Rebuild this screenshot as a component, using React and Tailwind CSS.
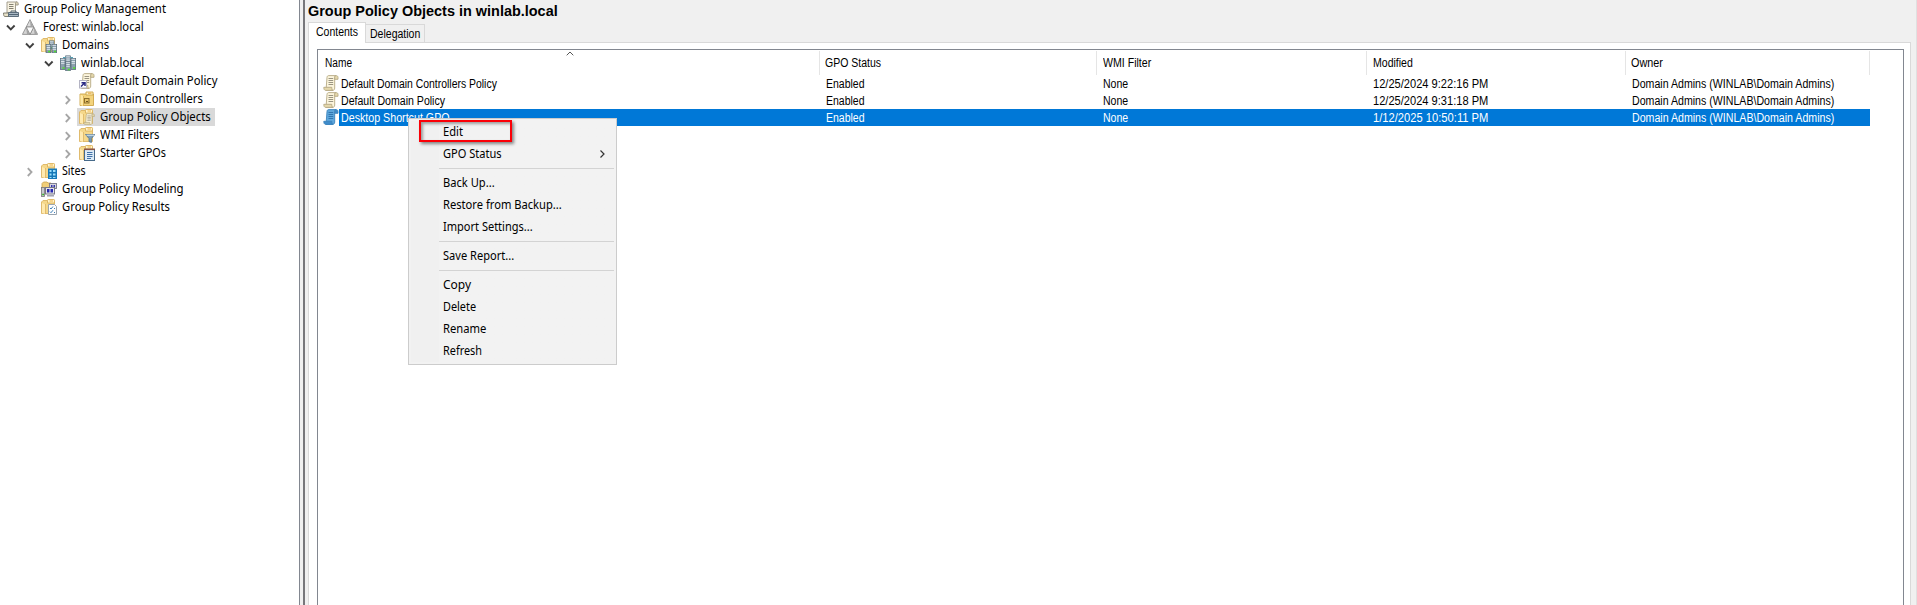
import { useLayoutEffect, useRef, useState } from "react";
import { clsx } from "clsx";

/* Text condensed or widened horizontally to an exact width, like GDI-hinted labels. */
function Label({ w, children, className }) {
  const ref = useRef(null);
  const [scale, setScale] = useState(1);
  useLayoutEffect(() => {
    setScale(w / ref.current.offsetWidth);
  }, [w]);
  return (
    <span className={clsx("block shrink-0 whitespace-nowrap", className)} style={{ width: w }}>
      <span ref={ref} className="inline-block origin-left" style={{ transform: `scaleX(${scale})` }}>
        {children}
      </span>
    </span>
  );
}

const Folder = () => (
  <g>
    <path d="M.5 14.500V3L2 1.500h4L7 3h6.500v11.500z" fill="#f5d88b" stroke="#dcb564" strokeWidth=".9" />
    <path d="M6.500 4V1.200c0-.5.3-.7.700-.7h5.600c.4 0 .7.2.7.7V4z" fill="#fff4cc" stroke="#dcb25a" strokeWidth=".9" />
    <path d="M8.500 2h3.500" stroke="#f0b44a" />
    <path d="M1 4l3.200 1.500V15L1 14z" fill="#ffeab0" />
    <path d="M4.500 5v10" stroke="#dcb564" strokeWidth=".8" />
  </g>
);

const Scroll = ({ fill = "#fcf5dc", line = "#8f8a78", edge = "#b5a985", curl = "#e6d9ac" }) => (
  <g strokeWidth=".9">
    <path d="M4 2.500C4 1.200 4.800.6 5.800.6H13c-1 .3-1.300 1-1.300 2V13c0 1.500-.8 2.400-2 2.400H3z" fill={fill} stroke={edge} />
    <path d="M11.700 4.300V2.400c0-2.400 3.300-2.300 3.300 0v1.900z" fill={curl} stroke={edge} />
    <path d="M.8 12.300h8c0 1.800.2 2.800 1.200 3.100H2.800C1.200 15.400.8 14 .8 12.300z" fill={curl} stroke={edge} />
    <path d="M5.500 3.500h4.700M5.500 5.500h4.700M5.500 7.500h4.700M5.500 9.500h4.700" stroke={line} />
  </g>
);

const Server = ({ x, y, h = 9 }) => (
  <g transform={`translate(${x} ${y})`}>
    <rect x=".4" y=".4" width="4.600" height={h} fill="#8da0ae" stroke="#586c7a" strokeWidth=".8" />
    <path d="M.8 1.300h3.800M1 3.500h3.500M1 5.300h3.500" stroke="#e3ecf2" strokeWidth=".9" />
    <path d={`M2.500 ${h - 1}h2`} stroke="#4fe02c" strokeWidth="1.600" />
  </g>
);

const drawings = {
  console: (
    <g>
      <path d="M4 1h10c-1.500.4-1.500 1.500-1.500 2.500V12H4z" fill="#f8f3e2" stroke="#9b9586" strokeWidth=".9" />
      <path d="M12.500 4V2.500c0-2 2.700-2 2.700 0V4z" fill="#ddd4b6" stroke="#9b9586" strokeWidth=".9" />
      <path d="M6 3.500h4.500M6 5.500h4.500M6 7.500h4.500" stroke="#858172" />
      <path d="M.5 12h6v3.500H2c-1.200 0-1.500-1.500-1.500-3.500z" fill="#e8e2c9" stroke="#777566" strokeWidth=".9" />
      <path d="M5.500 11.500h10v4h-10z" fill="#a9b8c4" stroke="#5d6e7c" />
      <path d="M8 11.500V10h5v1.500M6 13.500h9" fill="none" stroke="#526574" />
    </g>
  ),
  forest: (
    <g stroke="#858585" strokeWidth=".8" strokeLinejoin="round">
      <path d="M8 .6L4.200 8h7.600z" fill="#dcdcdc" />
      <path d="M4.200 8L.4 15.400H8zM11.800 8L8 15.400h7.600z" fill="#d4d4d4" />
      <path d="M4.200 8h7.600L8 15.400z" fill="#fafafa" />
      <path d="M8 .9L11.500 8H8.700zM4.200 8.400L8 15.200H5zM11.800 8.400l3.500 6.800h-2.700z" fill="#a4a4a4" stroke="none" />
    </g>
  ),
  domains: (
    <g>
      <Folder />
      <Server x={8} y={3.500} h={8} />
      <Server x={4.700} y={7} h={8.500} />
      <Server x={10.600} y={7} h={8.500} />
    </g>
  ),
  domain: (
    <g>
      <Server x={5.300} y={0.500} h={11} />
      <path d="M3 2.500h2.500M10.500 2.500H13" stroke="#4fa3b8" />
      <Server x={0} y={3} h={11} />
      <Server x={10.600} y={3} h={11} />
      <Server x={5.300} y={6} h={9.500} />
    </g>
  ),
  link: (
    <g>
      <Scroll />
      <rect x=".5" y="7.500" width="7" height="7.500" fill="#fff" stroke="#b4b4c4" />
      <path d="M2 13.500L5.500 10M2.500 9.700H6V13" fill="none" stroke="#2b2b84" strokeWidth="1.500" />
    </g>
  ),
  controllers: (
    <g>
      <path d="M1 14.500V3h13.500v11.500z" fill="#f3d37c" stroke="#cda548" strokeWidth=".9" />
      <path d="M7 4V1h7v3z" fill="#fff3c7" stroke="#cda548" strokeWidth=".9" />
      <path d="M9 2.200h3.500" stroke="#e8a53a" />
      <path d="M1.500 3.500L4 5v10l-2.500-1z" fill="#ffe9a6" />
      <path d="M4.500 5v10" stroke="#d5ad52" strokeWidth=".8" />
      <rect x="5.500" y="7.500" width="4.500" height="4.500" fill="#e6c266" stroke="#8c6e2c" />
      <path d="M7 10.500h2" stroke="#6d531c" />
    </g>
  ),
  objects: (
    <g>
      <Folder />
      <g transform="translate(4.300 4.300) scale(.74)">
        <Scroll />
      </g>
    </g>
  ),
  filters: (
    <g>
      <Folder />
      <path d="M6.500 7.500h9.300l-3.400 4v4l-2.400-1v-3z" fill="#7d9fb8" stroke="#4d6f8a" strokeWidth=".8" />
      <path d="M7.500 8.200h7.500" stroke="#dbe9f2" />
    </g>
  ),
  starter: (
    <g>
      <Folder />
      <rect x="5.500" y="4.500" width="10" height="11" fill="#dcebf7" stroke="#476a8a" />
      <path d="M5 4.300h11" stroke="#8a5548" strokeWidth="1.600" />
      <path d="M8 7.500h5.500M8 9.500h5.500M8 11.500h5.500M8 13.500h4" stroke="#4272a8" />
    </g>
  ),
  sites: (
    <g>
      <Folder />
      <path d="M7 5.500h9V16H7z" fill="#1779b8" />
      <path d="M8.500 7h2v2h-2zM12 7h2.500v2H12zM8.500 10.500h2v2h-2zM12 10.500h2.500v2H12zM8.500 14h2v1h-2zM12 14h2.500v1H12z" fill="#9de0fb" />
    </g>
  ),
  modeling: (
    <g>
      <path d="M1 8V2.500L2.500 1H6l1 1h3v6z" fill="#f0ce79" stroke="#c9a24e" strokeWidth=".8" />
      <rect x="8.500" y="2.500" width="7" height="5" fill="#d6d6de" stroke="#777786" strokeWidth=".9" />
      <path d="M10 4h1.500v2H10zM12.500 4H14v2h-1.500z" fill="#3535aa" />
      <rect x="4.500" y="6.500" width="9" height="6.500" fill="#e5e5eb" stroke="#777786" />
      <path d="M6 8h2.500v3.500H6zM9.500 8H12v3.500H9.500z" fill="#2525b0" />
      <path d="M6 14.800h7" stroke="#9b9ba8" strokeWidth="1.400" />
      <rect x=".5" y="6.500" width="3" height="9" fill="#c8c8cf" stroke="#777" strokeWidth=".8" />
      <path d="M1.200 13.500h1.800" stroke="#3ab52b" strokeWidth="1.500" />
    </g>
  ),
  results: (
    <g>
      <Folder />
      <path d="M7.500 5.500h6l2 2v8h-8z" fill="#fff" stroke="#9aa5b0" />
      <path d="M9 9l1 1 2-2.500M9 12.700l1 1 2-2.500M13 9.500h1M13 13.500h1" fill="none" stroke="#3f7fb8" />
    </g>
  ),
  scroll: <Scroll />,
  scrollBlue: <Scroll fill="#5ea7dc" line="#2b70aa" edge="#3d84bd" curl="#3f8ccb" />,
};

const Icon = ({ name }) => (
  <svg viewBox="0 0 16 16" className="block size-4 shrink-0">
    {drawings[name]}
  </svg>
);

const tree = [
  { text: "Group Policy Management", w: 142, icon: "console", pad: "pl-[3px]" },
  { text: "Forest: winlab.local", w: 101, icon: "forest", pad: "pl-[6px]", open: true },
  { text: "Domains", w: 47, icon: "domains", pad: "pl-[25px]", open: true },
  { text: "winlab.local", w: 63, icon: "domain", pad: "pl-[44px]", open: true },
  { text: "Default Domain Policy", w: 118, icon: "link", pad: "pl-[79px]" },
  { text: "Domain Controllers", w: 103, icon: "controllers", pad: "pl-[63px]", open: false },
  { text: "Group Policy Objects", w: 111, icon: "objects", pad: "pl-[63px]", open: false, selected: true },
  { text: "WMI Filters", w: 59, icon: "filters", pad: "pl-[63px]", open: false },
  { text: "Starter GPOs", w: 66, icon: "starter", pad: "pl-[63px]", open: false },
  { text: "Sites", w: 24, icon: "sites", pad: "pl-[25px]", open: false },
  { text: "Group Policy Modeling", w: 122, icon: "modeling", pad: "pl-[41px]" },
  { text: "Group Policy Results", w: 108, icon: "results", pad: "pl-[41px]" },
];

function Twisty({ open }) {
  return (
    <svg viewBox="0 0 16 18" className="block h-[18px] w-4 shrink-0" fill="none">
      {open ? (
        <path d="M1 7.500l3.800 3.800L8.600 7.500" stroke="#404040" strokeWidth="1.900" />
      ) : (
        <path d="M2.800 6.200l3.700 3.900-3.700 3.900" stroke="#a6a6a6" strokeWidth="1.900" />
      )}
    </svg>
  );
}

function TreeRow({ text, w, icon, pad, open, selected }) {
  return (
    <div className={clsx("flex h-[18px] items-center", pad)}>
      {open !== undefined && <Twisty open={open} />}
      <div className={clsx("flex h-[18px] items-center gap-[5px]", selected && "-ml-[2px] bg-[#d9d9d9] pr-1 pl-[2px]")}>
        <Icon name={icon} />
        <Label w={w} className="leading-[18px]">{text}</Label>
      </div>
    </div>
  );
}

const grid = "grid grid-cols-[502px_277px_270px_259px_244px]";

const columns = [
  { text: "Name", w: 27, pad: "pl-[7px]" },
  { text: "GPO Status", w: 56, pad: "pl-[5px]" },
  { text: "WMI Filter", w: 48.5, pad: "pl-[6px]" },
  { text: "Modified", w: 39.5, pad: "pl-[6px]" },
  { text: "Owner", w: 31.5, pad: "pl-[5px]" },
];

const rows = [
  { name: "Default Domain Controllers Policy", w: 155.5, modified: "12/25/2024 9:22:16 PM" },
  { name: "Default Domain Policy", w: 104, modified: "12/25/2024 9:31:18 PM" },
  { name: "Desktop Shortcut GPO", w: 108.5, modified: "1/12/2025 10:50:11 PM", selected: true },
];

function ListRow({ name, w, modified, selected }) {
  const cell = selected && "bg-[#0078d7]";
  return (
    <div className={clsx(grid, "h-[17px] grid-rows-[17px] leading-[18px]", selected && "text-white")}>
      <div className="flex pl-[5px]">
        <Icon name={selected ? "scrollBlue" : "scroll"} />
        <div className={clsx("h-[17px] flex-1 pl-[2px]", cell)}>
          <Label w={w}>{name}</Label>
        </div>
      </div>
      <div className={clsx("pl-[6px]", cell)}><Label w={38.5}>Enabled</Label></div>
      <div className={clsx("pl-[6px]", cell)}><Label w={25.5}>None</Label></div>
      <div className={clsx("pl-[6px]", cell)}><Label w={115.5}>{modified}</Label></div>
      <div className={clsx("pl-[6px]", cell)}><Label w={202.5}>Domain Admins (WINLAB\Domain Admins)</Label></div>
    </div>
  );
}

const menu = [
  [{ text: "Edit", w: 19.5 }, { text: "GPO Status", w: 59, submenu: true }],
  [{ text: "Back Up...", w: 52 }, { text: "Restore from Backup...", w: 119 }, { text: "Import Settings...", w: 90 }],
  [{ text: "Save Report...", w: 71 }],
  [{ text: "Copy", w: 28 }, { text: "Delete", w: 33.5 }, { text: "Rename", w: 43 }, { text: "Refresh", w: 39 }],
];

function ContextMenu() {
  return (
    <div className="absolute top-[118px] left-[408px] h-[247px] w-[209px] border border-[#cccccc] bg-[#f2f2f2] p-[2px] font-['Noto_Sans','Open_Sans',sans-serif] text-[12px]">
      <div className="bg-linear-to-r from-[#f0f0f0] from-[28px] to-[#f2f2f2] to-[28px]">
        {menu.map((group, i) => (
          <div key={i}>
            {i > 0 && (
              <div className="h-[7px] pt-[3px] pl-[28px]">
                <div className="h-px bg-[#d3d3d3]" />
              </div>
            )}
            {group.map((item) => (
              <div key={item.text} className="flex h-[22px] items-center justify-between pr-[8px] pl-[32px]">
                <Label w={item.w} className="leading-[22px]">{item.text}</Label>
                {item.submenu && (
                  <svg viewBox="0 0 7 10" className="h-[10px] w-[7px]" fill="none">
                    <path d="M1.500 1.500l3.500 3.500-3.500 3.500" stroke="#333" strokeWidth="1.200" />
                  </svg>
                )}
              </div>
            ))}
          </div>
        ))}
      </div>
    </div>
  );
}

export default function App() {
  return (
    <div className="relative flex h-[605px] w-[1917px] overflow-hidden bg-[#f0f0f0] font-['Liberation_Sans',Arial,sans-serif] text-[12px] text-black">
      <nav className="w-[300px] shrink-0 border-r border-[#828790] bg-white font-['Noto_Sans','Open_Sans',sans-serif]">
        {tree.map((node, i) => (
          <TreeRow key={i} {...node} />
        ))}
      </nav>
      <div className="w-[5px] shrink-0 border-r-2 border-[#77777b]" />
      <main className="flex flex-1 flex-col border-r border-[#e0e0e0] pr-[5px] pl-[3px]">
        <h1 className="h-[22px] text-[15px] leading-[22px] font-bold">
          <Label w={249.5}>Group Policy Objects in winlab.local</Label>
        </h1>
        <div className="flex h-5 items-end">
          <div className="z-10 -mb-px h-[21px] w-[58px] border border-b-0 border-[#d9d9d9] bg-white pl-[7px] leading-[18px]">
            <Label w={42}>Contents</Label>
          </div>
          <div className="h-[18px] w-[59px] border border-b-0 border-l-0 border-[#d9d9d9] pl-[4px] leading-[19px]">
            <Label w={50}>Delegation</Label>
          </div>
        </div>
        <section className="flex-1 border border-b-0 border-[#d9d9d9] bg-white pt-[6px] pr-[6px] pl-[8px]">
          <div className="relative h-full border border-b-0 border-[#828790]">
            <div className={clsx(grid, "h-[25px] grid-rows-[24px] pt-px")}>
              {columns.map((c) => (
                <div key={c.text} className={clsx("border-r border-[#e5e5e5] leading-[24px]", c.pad)}>
                  <Label w={c.w}>{c.text}</Label>
                </div>
              ))}
            </div>
            <svg viewBox="0 0 8 5" className="absolute top-[1px] left-[248px] h-[5px] w-[8px]" fill="none">
              <path d="M.7 4.300L4 1l3.300 3.300" stroke="#555" />
            </svg>
            {rows.map((r) => (
              <ListRow key={r.name} {...r} />
            ))}
          </div>
        </section>
      </main>
      <ContextMenu />
      <div className="absolute top-[120px] left-[419px] h-[22px] w-[93px] border-2 border-[#fb0007] shadow-[2px_2px_3px_rgba(0,0,0,0.45),inset_2px_2px_3px_rgba(0,0,0,0.35)]" />
    </div>
  );
}
